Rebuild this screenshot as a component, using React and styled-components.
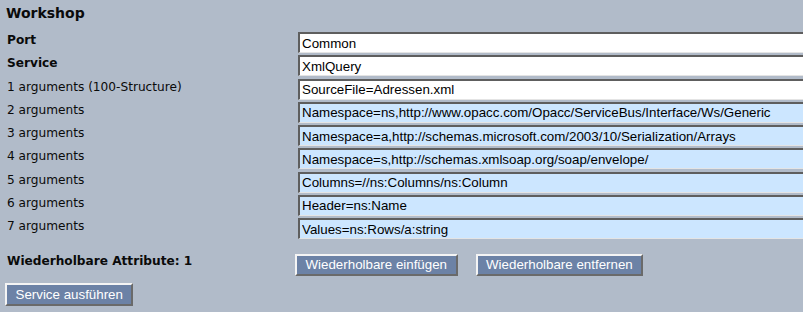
import React from "react";
import styled, { createGlobalStyle } from "styled-components";

const Global = createGlobalStyle`
  html, body { margin: 0; padding: 0; overflow: hidden; background: #b1bbc9; }
  body { font-family: "DejaVu Sans", Verdana, sans-serif; color: #0a0a0a; }
`;

const Page = styled.div`
  width: 803px;
  height: 312px;
  padding: 5px 0 0 5px;
  box-sizing: border-box;
  background: #b1bbc9;
  overflow: hidden;
`;

const Title = styled.h1`
  margin: 0 0 0 1px;
  font-size: 14px;
  line-height: 17px;
  font-weight: bold;
`;

const Form = styled.div`
  display: grid;
  grid-template-columns: 293px 1fr;
  row-gap: 2.25px;
  margin-top: 10px;
  align-items: start;
`;

const Label = styled.div`
  padding-left: 2px;
  padding-top: ${(p) => (p.$flush ? "0" : "1px")};
  font-size: 12.15px;
  line-height: 14px;
  font-weight: ${(p) => (p.$bold ? "bold" : "normal")};
  white-space: nowrap;
`;

const Field = styled.input`
  display: block;
  width: 540px;
  height: 21px;
  box-sizing: border-box;
  margin: 0;
  padding: 0 2px;
  border-style: solid;
  border-width: 2px 1px 1px 2px;
  border-color: #5e5e5e #e4e4e4 #e4e4e4 #5e5e5e;
  background: ${(p) => (p.$tint ? "#cce6ff" : "#ffffff")};
  font-family: "Liberation Sans", Arial, sans-serif;
  font-size: 13.33px;
  color: #000;
  outline: none;
`;

const ActionRow = styled.div`
  display: grid;
  grid-template-columns: 290px auto;
  align-items: start;
  margin-top: 15px;
`;

const ButtonGroup = styled.div`
  display: flex;
  gap: 18px;
`;

const Button = styled.button`
  height: 22px;
  box-sizing: border-box;
  margin: 0;
  padding: 0 8.5px;
  border-style: solid;
  border-width: 2px;
  border-color: #f4f4f4 #6a6a6a #6a6a6a #f4f4f4;
  background: #6c82a6;
  color: #ffffff;
  font-family: "Liberation Sans", Arial, sans-serif;
  font-size: 13.33px;
  line-height: 16px;
  white-space: nowrap;
  cursor: pointer;
`;

const SubmitRow = styled.div`
  margin-top: 7px;
`;

const SubmitButton = styled(Button)`
  height: 23px;
`;

const rows = [
  { label: "Port", value: "Common", bold: true },
  { label: "Service", value: "XmlQuery", bold: true },
  { label: "1 arguments (100-Structure)", value: "SourceFile=Adressen.xml" },
  {
    label: "2 arguments",
    value: "Namespace=ns,http://www.opacc.com/Opacc/ServiceBus/Interface/Ws/Generic",
    tint: true,
  },
  {
    label: "3 arguments",
    value: "Namespace=a,http://schemas.microsoft.com/2003/10/Serialization/Arrays",
    tint: true,
  },
  {
    label: "4 arguments",
    value: "Namespace=s,http://schemas.xmlsoap.org/soap/envelope/",
    tint: true,
  },
  { label: "5 arguments", value: "Columns=//ns:Columns/ns:Column", tint: true },
  { label: "6 arguments", value: "Header=ns:Name", tint: true },
  { label: "7 arguments", value: "Values=ns:Rows/a:string", tint: true },
];

export default function App() {
  return (
    <>
      <Global />
      <Page>
        <Title>Workshop</Title>
        <Form>
          {rows.map((r) => (
            <React.Fragment key={r.label}>
              <Label $bold={r.bold}>{r.label}</Label>
              <Field $tint={r.tint} defaultValue={r.value} />
            </React.Fragment>
          ))}
        </Form>
        <ActionRow>
          <Label $bold $flush>Wiederholbare Attribute: 1</Label>
          <ButtonGroup>
            <Button>Wiederholbare einfügen</Button>
            <Button>Wiederholbare entfernen</Button>
          </ButtonGroup>
        </ActionRow>
        <SubmitRow>
          <SubmitButton>Service ausführen</SubmitButton>
        </SubmitRow>
      </Page>
    </>
  );
}
